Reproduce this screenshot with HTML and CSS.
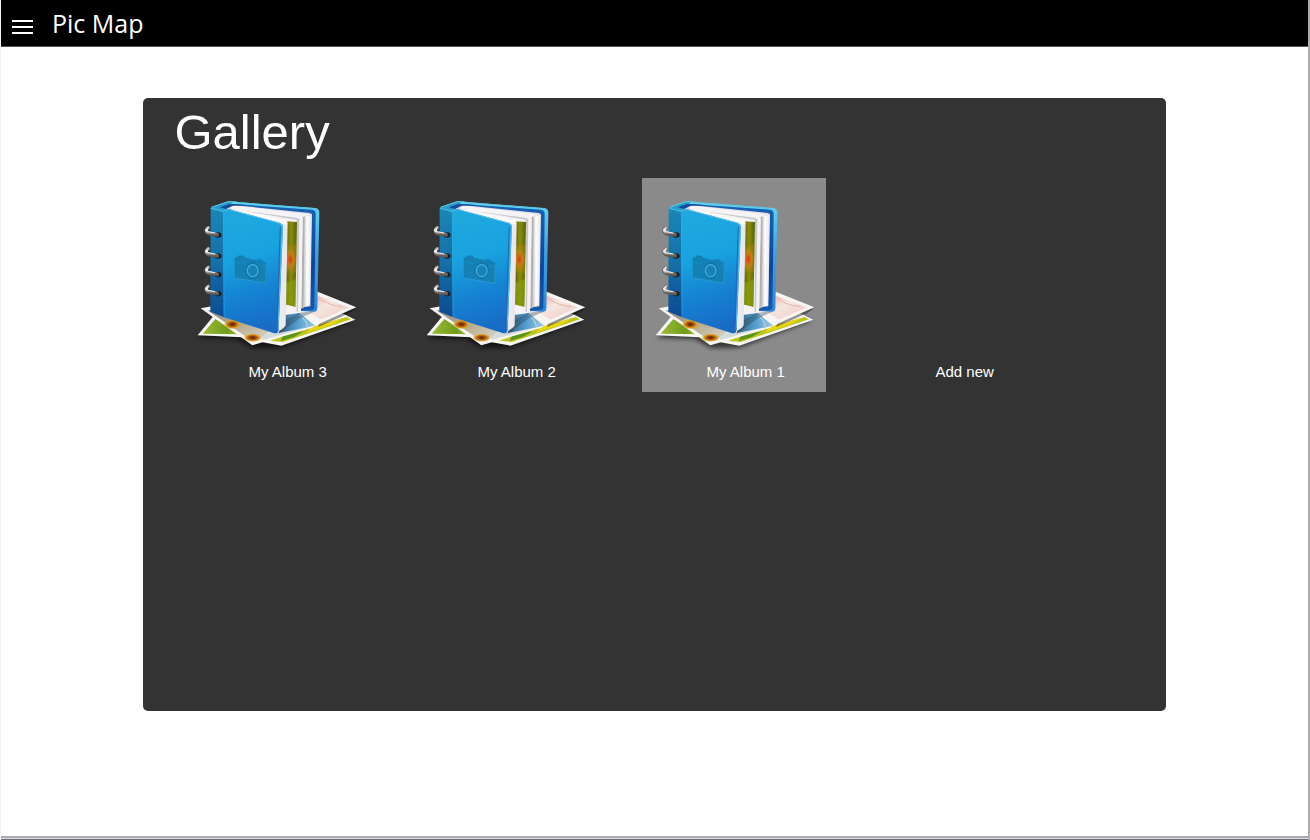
FILE: index.html
```html
<!DOCTYPE html>
<html lang="en">
<head>
<meta charset="utf-8">
<title>Pic Map</title>
<link rel="stylesheet" href="styles.css">
</head>
<body>
<svg class="sprite" aria-hidden="true">
  <defs>
    <linearGradient id="cover" x1=".2" y1="0" x2=".35" y2="1">
      <stop offset="0" stop-color="#1fa9dd"/><stop offset=".4" stop-color="#18a3e0"/><stop offset=".7" stop-color="#1583d2"/><stop offset="1" stop-color="#186cc6"/>
    </linearGradient>
    <linearGradient id="spine" x1="0" y1="0" x2="0" y2="1">
      <stop offset="0" stop-color="#1a86b8"/><stop offset=".5" stop-color="#1570a8"/><stop offset="1" stop-color="#0c4a92"/>
    </linearGradient>
    <linearGradient id="back" x1="0" y1="0" x2="0" y2="1">
      <stop offset="0" stop-color="#1762b4"/><stop offset=".6" stop-color="#0b449c"/><stop offset="1" stop-color="#1558ae"/>
    </linearGradient>
    <linearGradient id="rim" x1="0" y1="0" x2="0" y2="1">
      <stop offset="0" stop-color="#64d8f2"/><stop offset=".5" stop-color="#3a9fe2"/><stop offset="1" stop-color="#2d87da"/>
    </linearGradient>
    <linearGradient id="pages" x1="0" y1="0" x2="1" y2="0">
      <stop offset="0" stop-color="#c9c7c9"/><stop offset=".4" stop-color="#fff"/><stop offset="1" stop-color="#e8e6ea"/>
    </linearGradient>
    <linearGradient id="inner" x1="0" y1="0" x2="1" y2="0">
      <stop offset="0" stop-color="#54600a"/><stop offset=".5" stop-color="#8c8b08"/><stop offset="1" stop-color="#526508"/>
    </linearGradient>
    <linearGradient id="metal" x1="0" y1="0" x2="0" y2="1">
      <stop offset="0" stop-color="#a7a2a0"/><stop offset=".45" stop-color="#fff"/><stop offset="1" stop-color="#66605e"/>
    </linearGradient>
    <linearGradient id="grass" x1="0" y1="0" x2="1" y2="0">
      <stop offset="0" stop-color="#9dbb35"/><stop offset=".6" stop-color="#6f9d1c"/><stop offset="1" stop-color="#b3c32c"/>
    </linearGradient>
    <linearGradient id="peach" x1="0" y1="0" x2="1" y2="1">
      <stop offset="0" stop-color="#e6aaa0"/><stop offset=".4" stop-color="#f5e6e0"/><stop offset="1" stop-color="#eccabf"/>
    </linearGradient>
    <linearGradient id="sky" x1="0" y1="0" x2="1" y2="0">
      <stop offset="0" stop-color="#3c5a74"/><stop offset=".45" stop-color="#4c98cc"/><stop offset="1" stop-color="#a5cbe0"/>
    </linearGradient>
    <linearGradient id="meadow" x1="0" y1="0" x2="1" y2="1">
      <stop offset="0" stop-color="#8f8c88"/><stop offset=".5" stop-color="#b7ab8c"/><stop offset="1" stop-color="#dcd9d0"/>
    </linearGradient>
    <radialGradient id="flower">
      <stop offset="0" stop-color="#d6390e"/><stop offset=".45" stop-color="#d07014"/><stop offset="1" stop-color="#c79a12" stop-opacity="0"/>
    </radialGradient>
    <radialGradient id="daisy">
      <stop offset="0" stop-color="#4a1d05"/><stop offset=".4" stop-color="#a8500a"/><stop offset=".7" stop-color="#d89a18"/><stop offset="1" stop-color="#e0b040" stop-opacity="0"/>
    </radialGradient>
    <filter id="soft" x="-20%" y="-40%" width="140%" height="180%"><feGaussianBlur stdDeviation="6"/></filter>
    <g id="ring">
      <ellipse cx="84" cy="132" rx="11" ry="8" fill="#17242e"/>
      <path d="M55 110C43 119 50 129 63 129L82 132" fill="none" stroke="#5c5653" stroke-width="11" stroke-linecap="round"/>
      <path d="M55 109C44 117 50 126 62 127L81 130" fill="none" stroke="url(#metal)" stroke-width="8" stroke-linecap="round"/>
      <path d="M54 110C48 117 52 122 61 123L74 126" fill="none" stroke="#f4f1ef" stroke-width="3" stroke-linecap="round"/>
    </g>
    <symbol id="album" viewBox="-18 -39 552 540">
      <path d="M25 440L105 390L380 340L490 390L275 470L190 472L140 445Z" fill="#000" opacity=".6" filter="url(#soft)"/>
      <path d="M300 380L460 368L496 386L274 464L210 452Z" fill="#f5f5f4"/>
      <path d="M310 425L470 378L483 385L278 453L240 449Z" fill="#bdc419"/>
      <path d="M364 408L462 380L425 402L350 425Z" fill="#e6d510"/>
      <path d="M278 436L342 420L312 438L272 450Z" fill="#5a961d"/>
      <path d="M23 433L75 370L190 440Z" fill="#f7f7f5"/>
      <path d="M38 428L76 384L160 430Z" fill="url(#grass)"/>
      <path d="M390 370L499 352L478 366L385 408Z" fill="#000" opacity=".4"/>
      <path d="M383 302L499 349L385 400L300 370Z" fill="#f7f5f3"/>
      <path d="M383 314L477 349L390 388L350 372Z" fill="url(#peach)"/>
      <path d="M386 322Q420 345 458 347" fill="none" stroke="#e8b7a8" stroke-width="3"/>
      <path d="M32 352L70 345L345 355L400 390L365 411L187 463Z" fill="#f6f5f4"/>
      <path d="M52 358L100 360L240 420L216 440L187 450Z" fill="url(#meadow)"/>
      <ellipse cx="127" cy="400" rx="26" ry="15" fill="url(#daisy)"/>
      <ellipse cx="188" cy="440" rx="28" ry="13" fill="url(#daisy)"/>
      <path d="M214 438L262 412L372 398L358 407L218 447Z" fill="#d4dbdc"/>
      <path d="M284 372L328 366L376 404L266 426Z" fill="url(#sky)"/>
      <path d="M328 372Q350 388 352 407" fill="none" stroke="#c4dfec" stroke-width="3"/>
      <path d="M264 430L290 385L325 366L384 358L330 382Z" fill="#26384a" opacity=".35"/>

      <path d="M64 48L115 31Q130 31 150 34L376 51Q389 53 388 66L382 353Q381 362 370 362L332 360L118 57Z" fill="url(#rim)"/>
      <path d="M83 50L118 38L366 56Q378 58 377 70L373 349Q373 356 364 358L334 359L90 58Z" fill="url(#back)"/>
      <path d="M106 54L130 42L360 66L366 70L361 346L326 350Z" fill="#ddd9df"/>
      <path d="M120 51L135 44L360 70L343 75L344 348L328 354L310 92Z" fill="#f5f3f5"/>
      <path d="M344 76L364 72L360 342L342 348Z" fill="url(#pages)"/>
      <path d="M338 77L344 78L341 350L334 353Z" fill="#b3b0b4"/>
      <path d="M110 53L329 80L338 82L333 360L322 365L285 356L288 91Z" fill="#f4f2f3"/>
      <path d="M160 60L318 80L328 84L324 362L320 362L320 86Z" fill="#c9c6ca"/>
      <path d="M287 91L321 93L316 347L285 340Z" fill="url(#inner)"/>
      <path d="M291 165L320 160L318 245L289 244Z" fill="#ac820b" opacity=".5"/>
      <ellipse cx="301" cy="205" rx="17" ry="34" fill="url(#flower)"/>
      <path d="M288 276L318 265L316 347L285 340Z" fill="#8ba00c" opacity=".65"/>
      <path d="M115 55L273 79L293 96L287 402Q285 411 264 421L268 105Z" fill="url(#pages)"/>
      <path d="M115 54L145 57L292 88L292 98L270 103Z" fill="#fbfafb"/>

      <path d="M62 50L101 57L103 379L61 362Z" fill="url(#spine)"/>
      <path d="M62 50L113 32L130 34L93 47L119 56L101 66Z" fill="#249bca"/>
      <path d="M90 49L120 38L180 43L128 44L108 54Z" fill="#124c9a"/>
      <path d="M65 49L114 32Q130 31 150 35L374 53Q385 54 386 66" fill="none" stroke="#58c5e4" stroke-width="3"/>
      <path d="M99 57Q115 50 129 58L269 95Q280 98 279 111L266 416Q264 430 250 426L102 379Z" fill="url(#cover)"/>
      <path d="M101 59Q116 51 129 59L267 96Q278 100 277 112L264 415" fill="none" stroke="#5bbcee" stroke-width="3"/>
      <path d="M271 107L260 419" stroke="#2b62b8" stroke-width="3"/>
      <path d="M100 60L102 376" stroke="#31b0dc" stroke-width="2"/>
      <path d="M62 52L99 60" stroke="#4bc3e0" stroke-width="3"/>

      <path d="M135 201L144 199L147 194L161 196L165 202L176 203L182 206L200 209L205 205L216 208L219 213L228 216L228 276L136 260Z" fill="#1480b4" stroke="#1278ab" stroke-width="2"/>
      <path d="M136 214L168 219M208 224L227 227" fill="none" stroke="#1f90c4" stroke-width="2"/>
      <path d="M136 261L228 277V218" fill="none" stroke="#35a5d6" stroke-width="2"/>
      <ellipse cx="188" cy="239" rx="23" ry="25" fill="#1278ab"/>
      <ellipse cx="188" cy="239" rx="16" ry="18" fill="#1682b8" stroke="#48abd8" stroke-width="4"/>
      <use href="#ring"/>
      <use href="#ring" y="63"/>
      <use href="#ring" y="119"/>
      <use href="#ring" y="176"/>
    </symbol>
  </defs>
</svg>

<header class="topbar">
  <button class="menu" type="button" aria-label="Menu">
    <svg width="22" height="16" viewBox="0 0 22 16" aria-hidden="true"><path d="M1 2H22M1 8H22M1 14H22" stroke="#fff" stroke-width="2"/></svg>
  </button>
  <span class="brand">Pic Map</span>
</header>

<main class="gallery">
  <h1 class="title">Gallery</h1>
  <div class="albums">
    <a class="album" href="#album-3"><svg class="cover" aria-hidden="true"><use href="#album"/></svg><span class="name">My Album 3</span></a>
    <a class="album" href="#album-2"><svg class="cover" aria-hidden="true"><use href="#album"/></svg><span class="name">My Album 2</span></a>
    <a class="album selected" href="#album-1"><svg class="cover" aria-hidden="true"><use href="#album"/></svg><span class="name">My Album 1</span></a>
    <a class="album" href="#new"><span class="cover"></span><span class="name">Add new</span></a>
  </div>
</main>
<footer class="edge"></footer>
</body>
</html>
```

FILE: styles.css
```css
* {
  box-sizing: border-box;
}

body {
  display: flex;
  flex-direction: column;
  margin: 0;
  min-height: 100vh;
  background: #fff;
  border: solid #aeaeb0;
  border-width: 0 2px 0 1px;
  border-left-color: #f4f4f4;
  font-family: "Liberation Sans", Arial, sans-serif;
}

.sprite {
  position: absolute;
  width: 0;
  height: 0;
}

.topbar {
  display: flex;
  align-items: center;
  height: 47px;
  padding-left: 10px;
  background: #000;
  border-bottom: 1px solid #555;
  color: #fff;
}

.menu {
  display: flex;
  padding: 8px 0 0;
  border: 0;
  background: none;
}

.brand {
  margin-left: 19px;
  font: 25px/44px "Open Sans", "Noto Sans", sans-serif;
}

.gallery {
  width: 78.2%;
  min-height: 73vh;
  margin: 51px auto 0;
  padding: 6px 40px 32px 41px;
  background: #333;
  border-radius: 5px;
  color: #fff;
}

.title {
  margin: 0 0 18px -10px;
  font-size: 49px;
  font-weight: 400;
  line-height: 56px;
}

.albums {
  display: flex;
  flex-wrap: wrap;
  gap: 32px 45px;
}

.album {
  width: 184px;
  padding-bottom: 11px;
  color: #fff;
  text-decoration: none;
}

.album.selected {
  background: #8a8a8a;
}

.cover {
  display: block;
  width: 100%;
  height: 180px;
}

.name {
  display: block;
  margin-top: 5px;
  padding-left: 64px;
  font-size: 15px;
  line-height: 18px;
}

.edge {
  height: 4px;
  margin-top: auto;
  background: #dcdce0;
  border-top: 2px solid #acacb0;
  border-bottom: 1px solid #6c6e80;
}
```
